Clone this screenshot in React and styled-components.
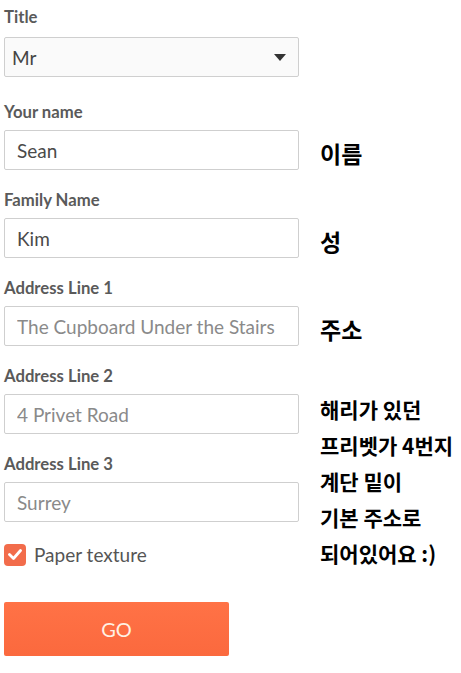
import React from 'react';
import styled, { createGlobalStyle } from 'styled-components';

const GlobalStyle = createGlobalStyle`
  body {
    margin: 0;
    background: #fff;
    font-family: Lato, "Noto Sans", sans-serif;
  }
`

const Page = styled.div`
  padding: 7px 4px 16px;
`

const Form = styled.form`
  display: grid;
  grid-template-columns: 295px 1fr;
  column-gap: 21px;
  align-items: center;
`

const Label = styled.label`
  grid-column: 1;
  display: block;
  margin-top: ${p => (p.$first ? 0 : 20)}px;
  margin-bottom: 8px;
  font-size: 16.7px;
  line-height: 20px;
  font-weight: 700;
  color: #5a5a5a;
`

const SelectBox = styled.div`
  grid-column: 1;
  box-sizing: border-box;
  height: 40px;
  margin: 2px 0 5px;
  padding: 0 12px 0 7px;
  display: flex;
  align-items: center;
  justify-content: space-between;
  background: #fafafa;
  border: 1px solid #cfcfcf;
  border-radius: 2px;
  font-size: 19px;
  color: #444;
`

const Input = styled.input`
  grid-column: 1;
  box-sizing: border-box;
  width: 295px;
  height: 40px;
  padding: 0 12px;
  border: 1px solid #cfcfcf;
  border-radius: 2px;
  background: #fff;
  font-family: Lato, sans-serif;
  font-size: 19px;
  color: #4a4a4a;
  outline: none;

  &::placeholder {
    color: #8a8a8a;
  }
`

const Note = styled.div`
  grid-column: 2;
  box-sizing: border-box;
  height: 40px;
  padding-top: 6px;
  font-family: "Noto Sans CJK KR", sans-serif;
  font-weight: 700;
  font-size: 23px;
  line-height: 34px;
  color: #000;
`

const LongNote = styled.div`
  grid-column: 2;
  grid-row: span 4;
  align-self: start;
  font-family: "Noto Sans CJK KR", sans-serif;
  font-weight: 700;
  font-size: 21px;
  line-height: 36px;
  color: #000;
  margin-top: -3px;
  white-space: nowrap;
`

const CheckRow = styled.label`
  grid-column: 1;
  display: flex;
  align-items: center;
  gap: 8px;
  margin: 21px 0 36px;
  font-size: 19px;
  color: #555;
`

const Box = styled.span`
  width: 22px;
  height: 22px;
  border-radius: 4px;
  background: #f26c4b;
  display: flex;
  align-items: center;
  justify-content: center;
`

const GoButton = styled.button`
  grid-column: 1;
  width: 225px;
  height: 54px;
  border: none;
  border-radius: 2px;
  background: linear-gradient(#ff7246, #fb693e);
  color: #fff1e4;
  font-family: Lato, sans-serif;
  font-size: 20px;
`

export default function App() {
  return (
    <Page>
      <GlobalStyle />
      <Form onSubmit={e => e.preventDefault()}>
        <Label $first>Title</Label>
        <SelectBox>
          <span>Mr</span>
          <svg width="12" height="7" viewBox="0 0 12 7">
            <path d="M0 0h12L6 7z" fill="#333" />
          </svg>
        </SelectBox>

        <Label>Your name</Label>
        <Input defaultValue="Sean" />
        <Note>이름</Note>

        <Label>Family Name</Label>
        <Input defaultValue="Kim" />
        <Note>성</Note>

        <Label>Address Line 1</Label>
        <Input placeholder="The Cupboard Under the Stairs" />
        <Note>주소</Note>

        <Label>Address Line 2</Label>
        <Input placeholder="4 Privet Road" />
        <LongNote>
          해리가 있던<br />
          프리벳가 4번지<br />
          계단 밑이<br />
          기본 주소로<br />
          되어있어요 :)
        </LongNote>

        <Label>Address Line 3</Label>
        <Input placeholder="Surrey" />

        <CheckRow>
          <Box>
            <svg width="14" height="11" viewBox="0 0 14 11">
              <path d="M1.5 5.5l4 4L12.5 1.5" stroke="#fff" strokeWidth="2.8" fill="none" strokeLinecap="round" strokeLinejoin="round" />
            </svg>
          </Box>
          Paper texture
        </CheckRow>

        <GoButton type="submit">GO</GoButton>
      </Form>
    </Page>
  );
}
